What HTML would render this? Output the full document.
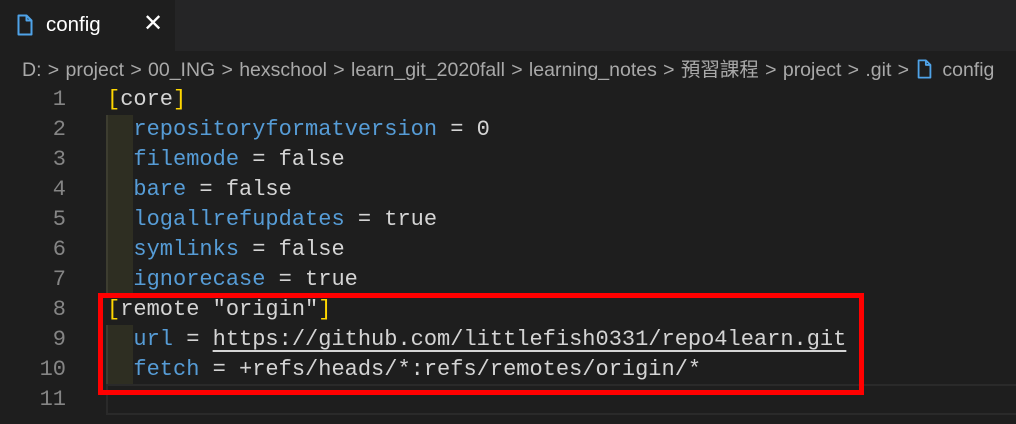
<!DOCTYPE html>
<html><head><meta charset="utf-8"><style>
body{margin:0;width:1016px;height:424px;background:#1e1e1e;overflow:hidden;position:relative;font-family:"Liberation Sans","Noto Sans CJK TC",sans-serif}
.tabbar{position:absolute;left:0;top:0;width:1016px;height:51px;background:#252526}
.tab{position:absolute;left:0;top:0;width:175px;height:51px;background:#1e1e1e;color:#fff;font-size:20.5px}
.crumb{position:absolute;left:22px;top:57px;color:#a9a9a9;font-size:19.5px;white-space:nowrap;line-height:26px}
.crumb .s{margin:0 6.3px;color:#a9a9a9}
.ln{position:absolute;left:0;width:66px;text-align:right;color:#858585;font:22px "Liberation Mono",monospace;line-height:30px}
.code{position:absolute;left:107px;font:22px "Liberation Mono",monospace;line-height:30px;white-space:pre;color:#d4d4d4}
.k{color:#569cd6}.b{color:#ffd700}
</style></head><body>
<div class="tabbar"></div>
<div class="tab">
<svg style="position:absolute;left:17px;top:14px" width="16" height="22" viewBox="0 0 16 22"><path d="M1.5 1.5h8l5 5v14h-13z M9.5 1.5v5h5" fill="none" stroke="#4fa3e8" stroke-width="2" stroke-linejoin="round"/></svg>
<span style="position:absolute;left:46px;top:13px">config</span>
<span style="position:absolute;left:143px;top:9px;font-size:24px">✕</span>
</div>
<div class="crumb">D:<span class="s">&gt;</span>project<span class="s">&gt;</span>00_ING<span class="s">&gt;</span>hexschool<span class="s">&gt;</span>learn_git_2020fall<span class="s">&gt;</span>learning_notes<span class="s">&gt;</span>預習課程<span class="s">&gt;</span>project<span class="s">&gt;</span>.git<span class="s">&gt;</span><svg style="vertical-align:-3px;margin:0 10px 0 2px" width="15" height="20" viewBox="0 0 16 22"><path d="M1.5 1.5h8l5 5v14h-13z M9.5 1.5v5h5" fill="none" stroke="#4fa3e8" stroke-width="2" stroke-linejoin="round"/></svg>config</div>
<div style="position:absolute;left:106px;top:115px;width:27px;height:180px;background:#2e2e22;border-left:2px solid #3d3d30;box-sizing:border-box"></div>
<div style="position:absolute;left:106px;top:325px;width:27px;height:60px;background:#2e2e22;border-left:2px solid #3d3d30;box-sizing:border-box"></div>
<div style="position:absolute;left:106px;top:384px;width:910px;height:31px;border:2px solid #2a2a2a;border-right:none;box-sizing:border-box"></div>
<div class="ln" style="top:85px">1<br>2<br>3<br>4<br>5<br>6<br>7<br>8<br>9<br>10<br>11</div>
<div class="code" style="top:85px"><span class="b">[</span>core<span class="b">]</span>
  <span class="k">repositoryformatversion</span> = 0
  <span class="k">filemode</span> = false
  <span class="k">bare</span> = false
  <span class="k">logallrefupdates</span> = true
  <span class="k">symlinks</span> = false
  <span class="k">ignorecase</span> = true
<span class="b">[</span>remote "origin"<span class="b">]</span>
  <span class="k">url</span> = <span style="text-decoration:underline;text-underline-offset:5px">https://github.com/littlefish0331/repo4learn.git</span>
  <span class="k">fetch</span> = +refs/heads/*:refs/remotes/origin/*
</div>
<div style="position:absolute;left:98px;top:293px;width:766px;height:102px;border:5px solid #f00;box-sizing:border-box"></div>
</body></html>
